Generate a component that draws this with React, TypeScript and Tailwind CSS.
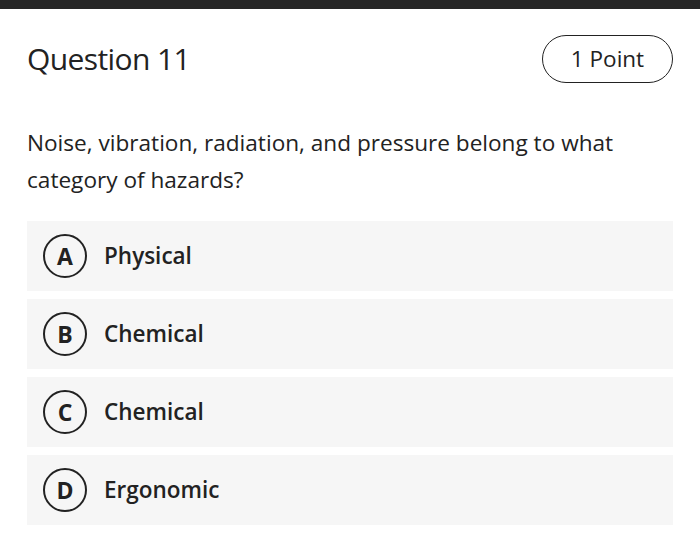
const OPTIONS = [
  { letter: 'A', label: 'Physical' },
  { letter: 'B', label: 'Chemical' },
  { letter: 'C', label: 'Chemical' },
  { letter: 'D', label: 'Ergonomic' },
];

export default function App() {
  return (
    <div className="min-h-[552px] w-[700px] bg-white font-['Open_Sans',sans-serif] text-[#222]">
      <div className="h-[9px] bg-[#262626]" />

      <div className="px-[27px]">
        {/* header */}
        <div className="flex items-center justify-between pt-[26px]">
          <h1 className="text-[30px] font-medium leading-none tracking-[-0.6px] text-[#222]">Question 11</h1>
          <div className="flex h-[48px] w-[131px] items-center justify-center rounded-full border-[1.5px] border-[#222] text-[22.5px] font-medium">
            1 Point
          </div>
        </div>

        {/* question */}
        <p className="mt-[41px] text-[22.6px] leading-[37px]">
          Noise, vibration, radiation, and pressure belong to what category of hazards?
        </p>

        {/* answers */}
        <div className="mt-[23px] flex flex-col gap-[8px]">
          {OPTIONS.map((o) => (
            <div key={o.letter} className="flex h-[70px] items-center bg-[#f6f6f6] pl-[16px]">
              <span className="flex h-[44px] w-[44px] items-center justify-center rounded-full border-[2.5px] border-[#222] text-[23px] font-bold">
                {o.letter}
              </span>
              <span className="ml-[17px] text-[22.5px] font-semibold">{o.label}</span>
            </div>
          ))}
        </div>
      </div>
    </div>
  );
}
